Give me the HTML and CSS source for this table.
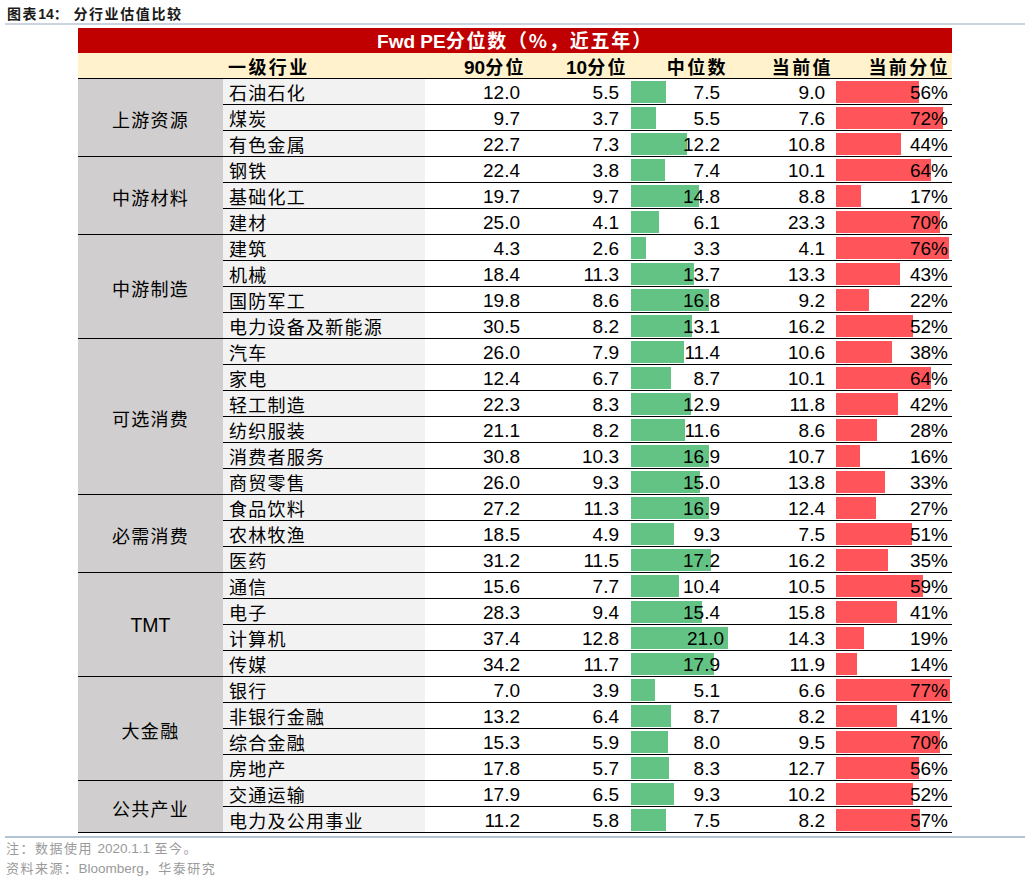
FILE: index.html
```html
<!DOCTYPE html>
<html lang="zh-CN">
<head>
<meta charset="utf-8">
<title>分行业估值比较</title>
<link rel="stylesheet" href="styles.css">
</head>
<body>
<div class="title"><b class="tl">图表<span class="lat">14</span>：</b><b class="tt">分行业估值比较</b></div>

<div class="table">
  <div class="thead-title"><span class="lat">Fwd PE</span>分位数（%，近五年）</div>
  <div class="thead-cols">
    <div></div>
    <div class="h-ind">一级行业</div>
    <div class="h-num"><span class="lat">90</span>分位</div>
    <div class="h-num"><span class="lat">10</span>分位</div>
    <div class="h-num">中位数</div>
    <div class="h-num">当前值</div>
    <div class="h-num h-last">当前分位</div>
  </div>

  <div class="group">
    <div class="cat">上游资源</div>
    <div class="rows">
      <div class="row"><div class="ind">石油石化</div><div class="num">12.0</div><div class="num">5.5</div><div class="bc med"><i class="bar g" style="width:34.7px"></i><span>7.5</span></div><div class="num">9.0</div><div class="bc pct"><i class="bar r" style="width:82.9px"></i><span>56%</span></div></div>
      <div class="row"><div class="ind">煤炭</div><div class="num">9.7</div><div class="num">3.7</div><div class="bc med"><i class="bar g" style="width:25.4px"></i><span>5.5</span></div><div class="num">7.6</div><div class="bc pct"><i class="bar r" style="width:106.6px"></i><span>72%</span></div></div>
      <div class="row"><div class="ind">有色金属</div><div class="num">22.7</div><div class="num">7.3</div><div class="bc med"><i class="bar g" style="width:56.4px"></i><span>12.2</span></div><div class="num">10.8</div><div class="bc pct"><i class="bar r" style="width:65.1px"></i><span>44%</span></div></div>
    </div>
  </div>

  <div class="group">
    <div class="cat">中游材料</div>
    <div class="rows">
      <div class="row"><div class="ind">钢铁</div><div class="num">22.4</div><div class="num">3.8</div><div class="bc med"><i class="bar g" style="width:34.2px"></i><span>7.4</span></div><div class="num">10.1</div><div class="bc pct"><i class="bar r" style="width:94.7px"></i><span>64%</span></div></div>
      <div class="row"><div class="ind">基础化工</div><div class="num">19.7</div><div class="num">9.7</div><div class="bc med"><i class="bar g" style="width:68.4px"></i><span>14.8</span></div><div class="num">8.8</div><div class="bc pct"><i class="bar r" style="width:25.2px"></i><span>17%</span></div></div>
      <div class="row"><div class="ind">建材</div><div class="num">25.0</div><div class="num">4.1</div><div class="bc med"><i class="bar g" style="width:28.2px"></i><span>6.1</span></div><div class="num">23.3</div><div class="bc pct"><i class="bar r" style="width:103.6px"></i><span>70%</span></div></div>
    </div>
  </div>

  <div class="group">
    <div class="cat">中游制造</div>
    <div class="rows">
      <div class="row"><div class="ind">建筑</div><div class="num">4.3</div><div class="num">2.6</div><div class="bc med"><i class="bar g" style="width:15.2px"></i><span>3.3</span></div><div class="num">4.1</div><div class="bc pct"><i class="bar r" style="width:112.5px"></i><span>76%</span></div></div>
      <div class="row"><div class="ind">机械</div><div class="num">18.4</div><div class="num">11.3</div><div class="bc med"><i class="bar g" style="width:63.3px"></i><span>13.7</span></div><div class="num">13.3</div><div class="bc pct"><i class="bar r" style="width:63.6px"></i><span>43%</span></div></div>
      <div class="row"><div class="ind">国防军工</div><div class="num">19.8</div><div class="num">8.6</div><div class="bc med"><i class="bar g" style="width:77.6px"></i><span>16.8</span></div><div class="num">9.2</div><div class="bc pct"><i class="bar r" style="width:32.6px"></i><span>22%</span></div></div>
      <div class="row"><div class="ind">电力设备及新能源</div><div class="num">30.5</div><div class="num">8.2</div><div class="bc med"><i class="bar g" style="width:60.5px"></i><span>13.1</span></div><div class="num">16.2</div><div class="bc pct"><i class="bar r" style="width:77px"></i><span>52%</span></div></div>
    </div>
  </div>

  <div class="group">
    <div class="cat">可选消费</div>
    <div class="rows">
      <div class="row"><div class="ind">汽车</div><div class="num">26.0</div><div class="num">7.9</div><div class="bc med"><i class="bar g" style="width:52.7px"></i><span>11.4</span></div><div class="num">10.6</div><div class="bc pct"><i class="bar r" style="width:56.2px"></i><span>38%</span></div></div>
      <div class="row"><div class="ind">家电</div><div class="num">12.4</div><div class="num">6.7</div><div class="bc med"><i class="bar g" style="width:40.2px"></i><span>8.7</span></div><div class="num">10.1</div><div class="bc pct"><i class="bar r" style="width:94.7px"></i><span>64%</span></div></div>
      <div class="row"><div class="ind">轻工制造</div><div class="num">22.3</div><div class="num">8.3</div><div class="bc med"><i class="bar g" style="width:59.6px"></i><span>12.9</span></div><div class="num">11.8</div><div class="bc pct"><i class="bar r" style="width:62.2px"></i><span>42%</span></div></div>
      <div class="row"><div class="ind">纺织服装</div><div class="num">21.1</div><div class="num">8.2</div><div class="bc med"><i class="bar g" style="width:53.6px"></i><span>11.6</span></div><div class="num">8.6</div><div class="bc pct"><i class="bar r" style="width:41.4px"></i><span>28%</span></div></div>
      <div class="row"><div class="ind">消费者服务</div><div class="num">30.8</div><div class="num">10.3</div><div class="bc med"><i class="bar g" style="width:78.1px"></i><span>16.9</span></div><div class="num">10.7</div><div class="bc pct"><i class="bar r" style="width:23.7px"></i><span>16%</span></div></div>
      <div class="row"><div class="ind">商贸零售</div><div class="num">26.0</div><div class="num">9.3</div><div class="bc med"><i class="bar g" style="width:69.3px"></i><span>15.0</span></div><div class="num">13.8</div><div class="bc pct"><i class="bar r" style="width:48.8px"></i><span>33%</span></div></div>
    </div>
  </div>

  <div class="group">
    <div class="cat">必需消费</div>
    <div class="rows">
      <div class="row"><div class="ind">食品饮料</div><div class="num">27.2</div><div class="num">11.3</div><div class="bc med"><i class="bar g" style="width:78.1px"></i><span>16.9</span></div><div class="num">12.4</div><div class="bc pct"><i class="bar r" style="width:40px"></i><span>27%</span></div></div>
      <div class="row"><div class="ind">农林牧渔</div><div class="num">18.5</div><div class="num">4.9</div><div class="bc med"><i class="bar g" style="width:43px"></i><span>9.3</span></div><div class="num">7.5</div><div class="bc pct"><i class="bar r" style="width:75.5px"></i><span>51%</span></div></div>
      <div class="row"><div class="ind">医药</div><div class="num">31.2</div><div class="num">11.5</div><div class="bc med"><i class="bar g" style="width:79.5px"></i><span>17.2</span></div><div class="num">16.2</div><div class="bc pct"><i class="bar r" style="width:51.8px"></i><span>35%</span></div></div>
    </div>
  </div>

  <div class="group">
    <div class="cat lat-cat">TMT</div>
    <div class="rows">
      <div class="row"><div class="ind">通信</div><div class="num">15.6</div><div class="num">7.7</div><div class="bc med"><i class="bar g" style="width:48px"></i><span>10.4</span></div><div class="num">10.5</div><div class="bc pct"><i class="bar r" style="width:87.3px"></i><span>59%</span></div></div>
      <div class="row"><div class="ind">电子</div><div class="num">28.3</div><div class="num">9.4</div><div class="bc med"><i class="bar g" style="width:71.1px"></i><span>15.4</span></div><div class="num">15.8</div><div class="bc pct"><i class="bar r" style="width:60.7px"></i><span>41%</span></div></div>
      <div class="row"><div class="ind">计算机</div><div class="num">37.4</div><div class="num">12.8</div><div class="bc med"><i class="bar g" style="width:97px"></i><span>21.0</span></div><div class="num">14.3</div><div class="bc pct"><i class="bar r" style="width:28.1px"></i><span>19%</span></div></div>
      <div class="row"><div class="ind">传媒</div><div class="num">34.2</div><div class="num">11.7</div><div class="bc med"><i class="bar g" style="width:82.7px"></i><span>17.9</span></div><div class="num">11.9</div><div class="bc pct"><i class="bar r" style="width:20.7px"></i><span>14%</span></div></div>
    </div>
  </div>

  <div class="group">
    <div class="cat">大金融</div>
    <div class="rows">
      <div class="row"><div class="ind">银行</div><div class="num">7.0</div><div class="num">3.9</div><div class="bc med"><i class="bar g" style="width:23.6px"></i><span>5.1</span></div><div class="num">6.6</div><div class="bc pct"><i class="bar r" style="width:114px"></i><span>77%</span></div></div>
      <div class="row"><div class="ind">非银行金融</div><div class="num">13.2</div><div class="num">6.4</div><div class="bc med"><i class="bar g" style="width:40.2px"></i><span>8.7</span></div><div class="num">8.2</div><div class="bc pct"><i class="bar r" style="width:60.7px"></i><span>41%</span></div></div>
      <div class="row"><div class="ind">综合金融</div><div class="num">15.3</div><div class="num">5.9</div><div class="bc med"><i class="bar g" style="width:37px"></i><span>8.0</span></div><div class="num">9.5</div><div class="bc pct"><i class="bar r" style="width:103.6px"></i><span>70%</span></div></div>
      <div class="row"><div class="ind">房地产</div><div class="num">17.8</div><div class="num">5.7</div><div class="bc med"><i class="bar g" style="width:38.3px"></i><span>8.3</span></div><div class="num">12.7</div><div class="bc pct"><i class="bar r" style="width:82.9px"></i><span>56%</span></div></div>
    </div>
  </div>

  <div class="group">
    <div class="cat">公共产业</div>
    <div class="rows">
      <div class="row"><div class="ind">交通运输</div><div class="num">17.9</div><div class="num">6.5</div><div class="bc med"><i class="bar g" style="width:43px"></i><span>9.3</span></div><div class="num">10.2</div><div class="bc pct"><i class="bar r" style="width:77px"></i><span>52%</span></div></div>
      <div class="row"><div class="ind">电力及公用事业</div><div class="num">11.2</div><div class="num">5.8</div><div class="bc med"><i class="bar g" style="width:34.7px"></i><span>7.5</span></div><div class="num">8.2</div><div class="bc pct"><i class="bar r" style="width:84.4px"></i><span>57%</span></div></div>
    </div>
  </div>
</div>

<div class="notes">
  <p>注：数据使用 <span class="lat">2020.1.1</span> 至今。</p>
  <p>资料来源：<span class="lat">Bloomberg</span>，华泰研究</p>
</div>
</body>
</html>
```

FILE: styles.css
```css
html, body {
  margin: 0;
  padding: 0;
  background: #ffffff;
}

body {
  width: 1030px;
  color: #000;
  font-family: "Noto Sans CJK SC", "Liberation Sans", sans-serif;
}

.lat {
  font-family: "Liberation Sans", Arial, sans-serif;
  letter-spacing: 0;
}

/* ---------- title ---------- */
.title {
  margin: 0 5px;
  padding: 4px 0 0 2px;
  height: 19px;
  line-height: 19px;
  font-size: 14px;
  border-bottom: 2px solid #cbd4df;
  color: #1a1a1a;
  display: flex;
}

.title b {
  font-weight: 700;
  letter-spacing: 1.6px;
}

.title .tl {
  margin-right: 4px;
}

/* ---------- table ---------- */
.table {
  margin: 3px 0 0 78px;
  width: 874px;
}

.thead-title {
  height: 25px;
  line-height: 24px;
  background: #c00000;
  color: #fff;
  text-align: center;
  font-size: 19px;
  font-weight: 700;
  letter-spacing: 1.8px;
}

.thead-title .lat {
  letter-spacing: 0;
}

.thead-cols {
  display: grid;
  grid-template-columns: 145px 202px 101px 102px 100px 105px 119px;
  height: 25px;
  background: #fff2cc;
  border-bottom: 1px solid #000;
  font-size: 18px;
  font-weight: 700;
  letter-spacing: 2.4px;
}

.thead-cols > div {
  padding-top: 2px;
  line-height: 22px;
  white-space: nowrap;
}

.h-ind {
  padding-left: 5px;
}

.h-num {
  text-align: right;
}

.h-num .lat {
  font-size: 19px;
  font-weight: 700;
}

.h-last {
  padding-right: 2px;
}

.group {
  display: flex;
  border-bottom: 1px solid #000;
}

.cat {
  width: 145px;
  flex: none;
  background: #d0cece;
  display: flex;
  align-items: center;
  justify-content: center;
  font-size: 18px;
  letter-spacing: 1.3px;
  padding-top: 2px;
  box-sizing: border-box;
}

.cat.lat-cat {
  font-family: "Liberation Sans", Arial, sans-serif;
  font-size: 19.5px;
  letter-spacing: 0;
}

.rows {
  flex: 1;
  display: flex;
  flex-direction: column;
}

.row {
  display: grid;
  grid-template-columns: 202px 99px 99px 101px 105px 123px;
  height: 25px;
  border-bottom: 1px solid #000;
}

.row:last-child {
  border-bottom: none;
}

.ind {
  background: #f2f2f2;
  padding: 2px 0 0 6px;
  line-height: 22px;
  font-size: 18px;
  letter-spacing: 1.25px;
  white-space: nowrap;
}

.num,
.bc span {
  font-family: "Liberation Sans", Arial, sans-serif;
  font-size: 19px;
  line-height: 22px;
  padding-top: 3px;
  text-align: right;
  padding-right: 4px;
}

.bc {
  display: grid;
  grid-template-columns: 1fr;
  grid-template-rows: 25px;
}

.bc.med {
  padding-left: 8px;
}

.bc.pct {
  padding-left: 7px;
}

.bc > * {
  grid-area: 1 / 1;
}

.bar {
  display: block;
  height: 22px;
  align-self: center;
  justify-self: start;
}

.bar.g {
  background: #63c384;
}

.bar.r {
  background: #ff555a;
}

.bc span {
  justify-self: end;
  position: relative;
}

/* ---------- notes ---------- */
.notes {
  margin: 3px 5px 0;
  border-top: 2px solid #b3c3d4;
  color: #9a9a9a;
  font-size: 13px;
  letter-spacing: 1.5px;
}

.notes p {
  margin: 0;
  line-height: 19px;
  padding-left: 1px;
}

.notes .lat {
  font-size: 13.5px;
  letter-spacing: 0;
}
```
